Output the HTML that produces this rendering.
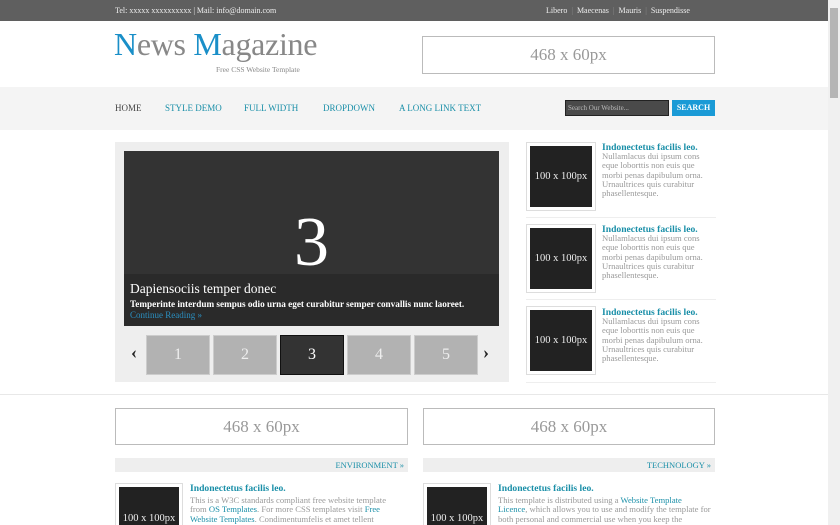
<!DOCTYPE html>
<html style="overflow:hidden;height:525px"><head><meta charset="utf-8"><style>
*{margin:0;padding:0;box-sizing:border-box}
body{width:840px;height:525px;overflow:hidden;background:#fff;font-family:"Liberation Serif",serif;position:relative;color:#666}
.a{position:absolute}
#top{left:0;top:0;width:828px;height:21px;background:#5f5f5f;color:#eee;font-size:8px}
#sb{left:828px;top:0;width:12px;height:525px;background:#f0f0f0}
#th{left:830px;top:8px;width:8px;height:90px;background:#b5b5b5}
.ad{border:1px solid #bbb;background:#fff;color:#999;font-size:17px;text-align:center}
.nav{font-size:9px;color:#1a8fa8;top:103px}
.thumb{height:40px;width:64px;background:#b2b2b2;border:1px solid #ccc;color:#eee;font-size:16px;text-align:center;line-height:38px;top:335px}
.img{background:#222;color:#eee;font-size:10.5px;text-align:center;border:3px solid #fff;outline:1px solid #ddd}
.t{color:#1a8fa8;font-weight:bold;font-size:9.6px}
.p{font-size:8.6px;color:#999;line-height:9.3px;white-space:nowrap}
.sep{height:1px;background:#eee;left:526px;width:190px}
.cat{background:#eee;color:#1a8fa8;font-size:8.5px;text-align:right;padding-right:4px;line-height:14px;height:14px;top:458px}
</style></head><body>
<div class="a" id="top"><span class="a" style="left:115px;top:6px">Tel: xxxxx xxxxxxxxxx | Mail: info@domain.com</span>
<span class="a" style="left:546px;top:6px;word-spacing:2px">Libero <span style="color:#888">|</span> Maecenas <span style="color:#888">|</span> Mauris <span style="color:#888">|</span> Suspendisse</span></div>
<div class="a" id="sb"></div><div class="a" id="th"></div>
<div class="a" style="left:114px;top:26px;font-size:32px;color:#888;letter-spacing:-0.3px"><span style="color:#1a8fc8">N</span>ews <span style="color:#1a8fc8">M</span>agazine</div>
<div class="a" style="left:216px;top:65px;font-size:7.5px;color:#888">Free CSS Website Template</div>
<div class="a ad" style="left:422px;top:36px;width:293px;height:38px;line-height:36px">468 x 60px</div>
<div class="a" style="left:0;top:87px;width:828px;height:43px;background:#f4f4f4"></div>
<div class="a nav" style="left:115px;color:#444">HOME</div>
<div class="a nav" style="left:165px">STYLE DEMO</div>
<div class="a nav" style="left:244px">FULL WIDTH</div>
<div class="a nav" style="left:323px">DROPDOWN</div>
<div class="a nav" style="left:399px">A LONG LINK TEXT</div>
<div class="a" style="left:565px;top:100px;width:104px;height:16px;background:#4a4a4a;border:1px solid #222;color:#bbb;font-size:7px;padding:3px 2px">Search Our Website...</div>
<div class="a" style="left:672px;top:100px;width:43px;height:16px;background:#1a9ad6;color:#fff;font-size:8px;font-weight:bold;text-align:center;line-height:16px">SEARCH</div>
<div class="a" style="left:115px;top:142px;width:394px;height:240px;background:#eee"></div>
<div class="a" style="left:124px;top:151px;width:375px;height:175px;background:#333;overflow:hidden">
<div class="a" style="left:0;top:123px;width:375px;height:52px;background:#2a2a2a"></div>
<div class="a" style="left:0;top:52px;width:375px;text-align:center;color:#fff;font-size:70px;line-height:80px">3</div>
<div class="a" style="left:6px;top:130px;color:#fff;font-size:13.5px">Dapiensociis temper donec</div>
<div class="a" style="left:6px;top:148px;color:#fff;font-size:9.2px;font-weight:bold;white-space:nowrap">Temperinte interdum sempus odio urna eget curabitur semper convallis nunc laoreet.</div>
<div class="a" style="left:6px;top:159px;color:#2a8fc0;font-size:9px">Continue Reading »</div>
</div>
<div class="a" style="left:131px;top:342px;font-size:18px;color:#222;font-weight:bold">‹</div>
<div class="a" style="left:483px;top:342px;font-size:18px;color:#222;font-weight:bold">›</div>
<div class="a thumb" style="left:146px">1</div>
<div class="a thumb" style="left:213px">2</div>
<div class="a thumb" style="left:280px;background:#333;border-color:#111;color:#fff">3</div>
<div class="a thumb" style="left:347px">4</div>
<div class="a thumb" style="left:414px">5</div>

<div class="a img" style="left:527px;top:143px;width:68px;height:67px;line-height:61px">100 x 100px</div>
<div class="a t" style="left:602px;top:142px">Indonectetus facilis leo.</div>
<div class="a p" style="left:602px;top:152px">Nullamlacus dui ipsum cons<br>eque loborttis non euis que<br>morbi penas dapibulum orna.<br>Urnaultrices quis curabitur<br>phasellentesque.</div>
<div class="a sep" style="top:217px"></div>
<div class="a img" style="left:527px;top:225px;width:68px;height:67px;line-height:61px">100 x 100px</div>
<div class="a t" style="left:602px;top:224px">Indonectetus facilis leo.</div>
<div class="a p" style="left:602px;top:234px">Nullamlacus dui ipsum cons<br>eque loborttis non euis que<br>morbi penas dapibulum orna.<br>Urnaultrices quis curabitur<br>phasellentesque.</div>
<div class="a sep" style="top:299px"></div>
<div class="a img" style="left:527px;top:307px;width:68px;height:67px;line-height:61px">100 x 100px</div>
<div class="a t" style="left:602px;top:307px">Indonectetus facilis leo.</div>
<div class="a p" style="left:602px;top:317px">Nullamlacus dui ipsum cons<br>eque loborttis non euis que<br>morbi penas dapibulum orna.<br>Urnaultrices quis curabitur<br>phasellentesque.</div>
<div class="a sep" style="top:382px"></div>
<div class="a" style="left:0;top:394px;width:828px;height:1px;background:#e8e8e8"></div>
<div class="a ad" style="left:115px;top:408px;width:293px;height:37px;line-height:36px">468 x 60px</div>
<div class="a ad" style="left:423px;top:408px;width:292px;height:37px;line-height:36px">468 x 60px</div>
<div class="a cat" style="left:115px;width:293px">ENVIRONMENT »</div>
<div class="a cat" style="left:423px;width:292px">TECHNOLOGY »</div>
<div class="a img" style="left:116px;top:484px;width:66px;height:41px;padding-top:26px;border-bottom:0">100 x 100px</div>
<div class="a t" style="left:190px;top:483px">Indonectetus facilis leo.</div>
<div class="a p" style="left:190px;top:496px">This is a W3C standards compliant free website template<br>from <span style="color:#1a8fa8">OS Templates</span>. For more CSS templates visit <span style="color:#1a8fa8">Free</span><br><span style="color:#1a8fa8">Website Templates</span>. Condimentumfelis et amet tellent</div>
<div class="a img" style="left:424px;top:484px;width:66px;height:41px;padding-top:26px;border-bottom:0">100 x 100px</div>
<div class="a t" style="left:498px;top:483px">Indonectetus facilis leo.</div>
<div class="a p" style="left:498px;top:496px">This template is distributed using a <span style="color:#1a8fa8">Website Template</span><br><span style="color:#1a8fa8">Licence</span>, which allows you to use and modify the template for<br>both personal and commercial use when you keep the</div>
</body></html>
